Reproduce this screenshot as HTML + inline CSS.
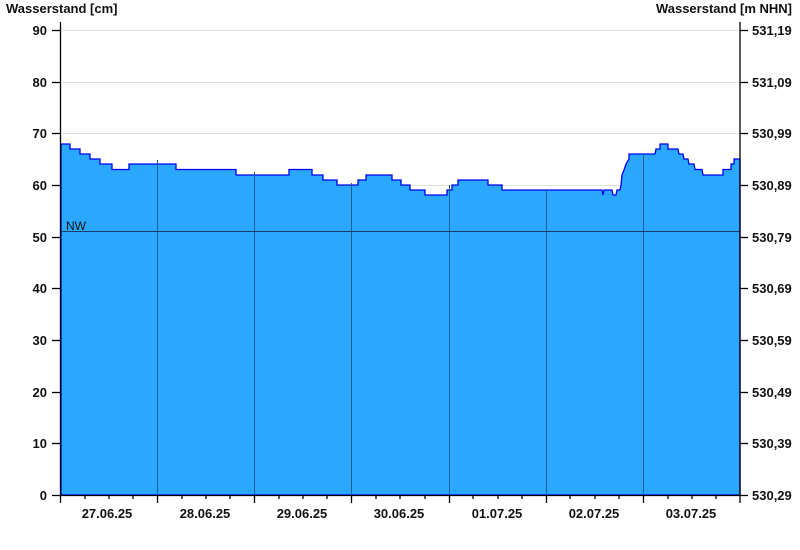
<!DOCTYPE html>
<html><head><meta charset="utf-8"><style>
body{margin:0;background:#fff;width:800px;height:550px;overflow:hidden}
svg{display:block}
text{font-family:"Liberation Sans",Arial,sans-serif;font-weight:bold;font-size:13px;fill:#111}
</style></head><body>
<svg width="800" height="550" xmlns="http://www.w3.org/2000/svg">
<g stroke="#ddd" stroke-width="1">
<line x1="61" y1="30.5" x2="740" y2="30.5"/><line x1="61" y1="82.5" x2="740" y2="82.5"/><line x1="61" y1="133.5" x2="740" y2="133.5"/><line x1="61" y1="185.5" x2="740" y2="185.5"/>
</g>
<polygon fill="#2aa8ff" stroke="#0000ee" stroke-width="1.3" points="61,495 61,144 70,144 70,149 80,149 80,154 90,154 90,159 100,159 100,164 112,164 112,169.5 129,169.5 129,164 176,164 176,169.5 236,169.5 236,175 289,175 289,169.5 312,169.5 312,175 323,175 323,180 337,180 337,185 358,185 358,180 366,180 366,175 392,175 392,180 401,180 401,185 410,185 410,190 425,190 425,195 447,195 447,190 452,190 452,185 458,185 458,180 488,180 488,185 502,185 502,190 602,190 603,195 604,190 612,190 613,195 616,195 617,190 620,190 621,185 622,175 624,170 626,164 629,159 629,154 655,154 656,149 660,149 660,144 668,144 668,149 678,149 679,154 683,154 684,159 688,159 689,164 694,164 695,169.5 702,169.5 703,175 723,175 723,169.5 731,169.5 731,164 734,164 734,159 740,159 740,495"/>
<g stroke="#1b5f8f" stroke-width="1">
<line x1="157.5" y1="160" x2="157.5" y2="495"/><line x1="254.5" y1="172" x2="254.5" y2="495"/><line x1="351.5" y1="183" x2="351.5" y2="495"/><line x1="449.5" y1="185" x2="449.5" y2="495"/><line x1="546.5" y1="190" x2="546.5" y2="495"/><line x1="643.5" y1="154" x2="643.5" y2="495"/>
</g>
<line x1="61" y1="231.5" x2="740" y2="231.5" stroke="#1a3c70" stroke-width="1"/>
<text x="66" y="230" style="font-weight:normal;font-size:12px">NW</text>
<g stroke="#000" stroke-width="1.3">
<line x1="60.5" y1="22" x2="60.5" y2="495"/><line x1="740" y1="22" x2="740" y2="495"/><line x1="52" y1="495.5" x2="748" y2="495.5"/>
<line x1="52" y1="30.5" x2="60" y2="30.5"/><line x1="52" y1="82.5" x2="60" y2="82.5"/><line x1="52" y1="133.5" x2="60" y2="133.5"/><line x1="52" y1="185.5" x2="60" y2="185.5"/><line x1="52" y1="237.5" x2="60" y2="237.5"/><line x1="52" y1="288.5" x2="60" y2="288.5"/><line x1="52" y1="340.5" x2="60" y2="340.5"/><line x1="52" y1="392.5" x2="60" y2="392.5"/><line x1="52" y1="443.5" x2="60" y2="443.5"/>
<line x1="740" y1="30.5" x2="748" y2="30.5"/><line x1="740" y1="82.5" x2="748" y2="82.5"/><line x1="740" y1="133.5" x2="748" y2="133.5"/><line x1="740" y1="185.5" x2="748" y2="185.5"/><line x1="740" y1="237.5" x2="748" y2="237.5"/><line x1="740" y1="288.5" x2="748" y2="288.5"/><line x1="740" y1="340.5" x2="748" y2="340.5"/><line x1="740" y1="392.5" x2="748" y2="392.5"/><line x1="740" y1="443.5" x2="748" y2="443.5"/>
<line x1="60.5" y1="495" x2="60.5" y2="503"/><line x1="157.5" y1="495" x2="157.5" y2="503"/><line x1="254.5" y1="495" x2="254.5" y2="503"/><line x1="351.5" y1="495" x2="351.5" y2="503"/><line x1="449.5" y1="495" x2="449.5" y2="503"/><line x1="546.5" y1="495" x2="546.5" y2="503"/><line x1="643.5" y1="495" x2="643.5" y2="503"/><line x1="740" y1="495" x2="740" y2="503"/>
<line x1="85" y1="495" x2="85" y2="499"/><line x1="109" y1="495" x2="109" y2="499"/><line x1="133" y1="495" x2="133" y2="499"/>
<line x1="182" y1="495" x2="182" y2="499"/><line x1="206" y1="495" x2="206" y2="499"/><line x1="230" y1="495" x2="230" y2="499"/>
<line x1="279" y1="495" x2="279" y2="499"/><line x1="303" y1="495" x2="303" y2="499"/><line x1="327" y1="495" x2="327" y2="499"/>
<line x1="376" y1="495" x2="376" y2="499"/><line x1="400" y1="495" x2="400" y2="499"/><line x1="425" y1="495" x2="425" y2="499"/>
<line x1="473" y1="495" x2="473" y2="499"/><line x1="498" y1="495" x2="498" y2="499"/><line x1="522" y1="495" x2="522" y2="499"/>
<line x1="570" y1="495" x2="570" y2="499"/><line x1="595" y1="495" x2="595" y2="499"/><line x1="619" y1="495" x2="619" y2="499"/>
<line x1="668" y1="495" x2="668" y2="499"/><line x1="692" y1="495" x2="692" y2="499"/><line x1="716" y1="495" x2="716" y2="499"/>
</g>
<text x="6" y="13">Wasserstand [cm]</text>
<text x="792" y="13" text-anchor="end">Wasserstand [m NHN]</text>
<g text-anchor="end">
<text x="47" y="35">90</text><text x="47" y="87">80</text><text x="47" y="138">70</text><text x="47" y="190">60</text><text x="47" y="242">50</text><text x="47" y="293">40</text><text x="47" y="345">30</text><text x="47" y="397">20</text><text x="47" y="448">10</text><text x="47" y="500">0</text>
</g>
<g>
<text x="752" y="35">531,19</text><text x="752" y="87">531,09</text><text x="752" y="138">530,99</text><text x="752" y="190">530,89</text><text x="752" y="242">530,79</text><text x="752" y="293">530,69</text><text x="752" y="345">530,59</text><text x="752" y="397">530,49</text><text x="752" y="448">530,39</text><text x="752" y="500">530,29</text>
</g>
<g text-anchor="middle">
<text x="107" y="518">27.06.25</text><text x="205" y="518">28.06.25</text><text x="302" y="518">29.06.25</text><text x="399" y="518">30.06.25</text><text x="497" y="518">01.07.25</text><text x="594" y="518">02.07.25</text><text x="691" y="518">03.07.25</text>
</g>
</svg>
</body></html>
